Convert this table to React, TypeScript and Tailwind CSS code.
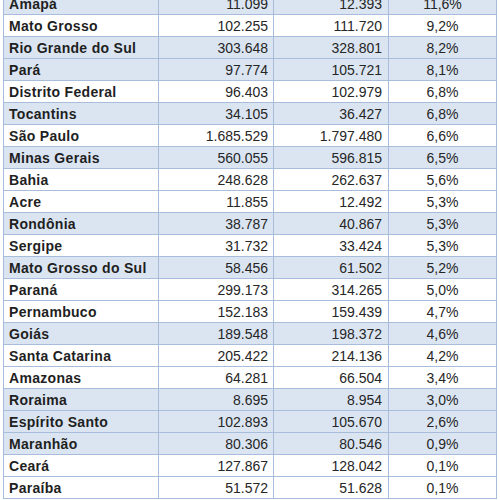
const rows: [string, string, string, string, boolean][] = [
  ["Amapá", "11.099", "12.393", "11,6%", true],
  ["Mato Grosso", "102.255", "111.720", "9,2%", false],
  ["Rio Grande do Sul", "303.648", "328.801", "8,2%", true],
  ["Pará", "97.774", "105.721", "8,1%", true],
  ["Distrito Federal", "96.403", "102.979", "6,8%", false],
  ["Tocantins", "34.105", "36.427", "6,8%", true],
  ["São Paulo", "1.685.529", "1.797.480", "6,6%", false],
  ["Minas Gerais", "560.055", "596.815", "6,5%", true],
  ["Bahia", "248.628", "262.637", "5,6%", false],
  ["Acre", "11.855", "12.492", "5,3%", false],
  ["Rondônia", "38.787", "40.867", "5,3%", true],
  ["Sergipe", "31.732", "33.424", "5,3%", false],
  ["Mato Grosso do Sul", "58.456", "61.502", "5,2%", true],
  ["Paraná", "299.173", "314.265", "5,0%", false],
  ["Pernambuco", "152.183", "159.439", "4,7%", false],
  ["Goiás", "189.548", "198.372", "4,6%", true],
  ["Santa Catarina", "205.422", "214.136", "4,2%", false],
  ["Amazonas", "64.281", "66.504", "3,4%", false],
  ["Roraima", "8.695", "8.954", "3,0%", true],
  ["Espírito Santo", "102.893", "105.670", "2,6%", true],
  ["Maranhão", "80.306", "80.546", "0,9%", true],
  ["Ceará", "127.867", "128.042", "0,1%", false],
  ["Paraíba", "51.572", "51.628", "0,1%", false],
];

export default function App() {
  return (
    <div className="w-[500px] h-[500px] overflow-hidden bg-white pl-[3px]">
      <table
        className="mt-[-8px] w-[493px] border-collapse table-fixed text-[14px] text-[#262626]"
        style={{ fontFamily: '"Liberation Sans", Arial, sans-serif' }}
      >
        <colgroup>
          <col className="w-[155px]" />
          <col className="w-[115px]" />
          <col className="w-[115px]" />
          <col className="w-[108px]" />
        </colgroup>
        <tbody>
          {rows.map(([name, a, b, pct, blue]) => (
            <tr key={name} className={blue ? "h-[22px] bg-[#dbe5f2]" : "h-[22px] bg-white"}>
              <td className="border border-[#a8bcdb] px-[5px] py-0 font-bold tracking-[0.3px] text-[#1f1f1f] leading-none">
                {name}
              </td>
              <td className="border border-[#a8bcdb] pr-[5px] py-0 text-right leading-none">{a}</td>
              <td className="border border-[#a8bcdb] pr-[6px] py-0 text-right leading-none">{b}</td>
              <td className="border border-[#a8bcdb] py-0 text-center leading-none">{pct}</td>
            </tr>
          ))}
        </tbody>
      </table>
    </div>
  );
}
